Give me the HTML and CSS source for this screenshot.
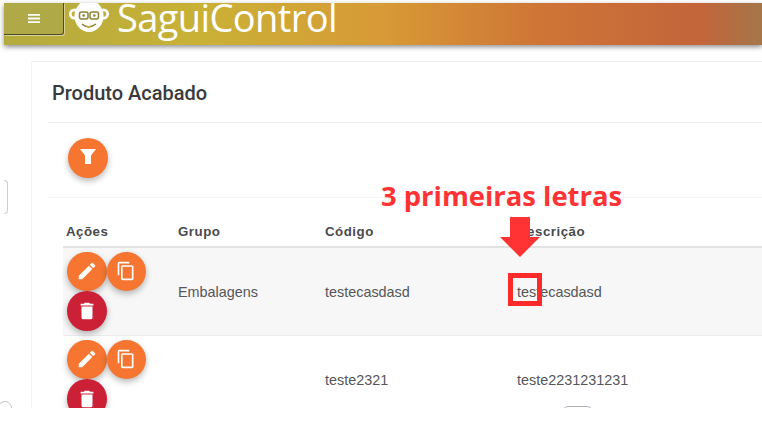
FILE: index.html
```html
<!DOCTYPE html>
<html lang="pt">
<head>
  <meta charset="UTF-8" />
  <title>SaguiControl</title>
  <link rel="stylesheet" href="styles.css">
</head>
<body>
  <div class="shot">
    <div class="topbar">
      <button class="menu-btn" type="button">
        <svg width="12" height="9" viewBox="0 0 12 9"><path d="M0 0h12v1.800H0zM0 3.600h12v1.800H0zM0 7.200h12V9H0z" fill="#fff"/></svg>
      </button>
      <svg class="logo-mark" width="42" height="32" viewBox="0 2 42 32">
        <circle cx="6.500" cy="13" r="5.500" fill="#fff"/>
        <circle cx="35.500" cy="13" r="5.500" fill="#fff"/>
        <circle cx="6.500" cy="13" r="2.800" fill="#c2ae3f"/>
        <circle cx="35.500" cy="13" r="2.800" fill="#c2ae3f"/>
        <ellipse cx="21" cy="15" rx="14.500" ry="16" fill="#fff"/>
        <rect x="11.500" y="11" width="8.500" height="7" rx="2" fill="#fff" stroke="#8a8434" stroke-width="1.500"/>
        <rect x="22" y="11" width="8.500" height="7" rx="2" fill="#fff" stroke="#8a8434" stroke-width="1.500"/>
        <circle cx="15.700" cy="14.500" r="1.300" fill="#8a8434"/>
        <circle cx="26.300" cy="14.500" r="1.300" fill="#8a8434"/>
        <path d="M14 23c3 3 9 4 14 0" fill="none" stroke="#8a8434" stroke-width="1.500"/>
        <path d="M18 25c1 3 4 3 5 0" fill="#c2ae3f"/>
      </svg>
      <div class="logo-text">SaguiControl</div>
    </div>

    <div class="page">
      <div class="side-tab"></div>
      <div class="side-arc"></div>
      <div class="card">
        <h1 class="card-title">Produto Acabado</h1>
        <div class="filter-row">
          <button class="fab" type="button">
            <svg class="filter-icon" width="16" height="15" viewBox="0 0 16 15"><path d="M0 0h16l-5 6.500V15H5V6.500z" fill="#fff"/></svg>
          </button>
        </div>

        <div class="table">
          <div class="row head">
            <div class="cell actions">Ações</div>
            <div class="cell grupo">Grupo</div>
            <div class="cell codigo">Código</div>
            <div class="cell">Descrição</div>
          </div>

          <div class="row striped">
            <div class="cell actions">
              <div class="btn-wrap">
                <button class="fab" type="button">
                  <svg width="22" height="22" viewBox="0 0 24 24"><path d="M3 17.250V21h3.750L17.810 9.940l-3.750-3.750zM20.710 7.040a1 1 0 0 0 0-1.410l-2.340-2.340a1 1 0 0 0-1.410 0l-1.830 1.830 3.750 3.750z" fill="#fff"/></svg>
                </button>
                <button class="fab" type="button">
                  <svg width="20" height="20" viewBox="0 0 24 24"><path d="M16 1H4a2 2 0 0 0-2 2v14h2V3h12zm3 4H8a2 2 0 0 0-2 2v14a2 2 0 0 0 2 2h11a2 2 0 0 0 2-2V7a2 2 0 0 0-2-2zm0 16H8V7h11z" fill="#fff"/></svg>
                </button>
                <button class="fab danger" type="button">
                  <svg width="22" height="22" viewBox="0 0 24 24"><path d="M6 19a2 2 0 0 0 2 2h8a2 2 0 0 0 2-2V7H6zM19 4h-3.500l-1-1h-5l-1 1H5v2h14z" fill="#fff"/></svg>
                </button>
              </div>
            </div>
            <div class="cell grupo">Embalagens</div>
            <div class="cell codigo">testecasdasd</div>
            <div class="cell">testecasdasd</div>
          </div>

          <div class="row">
            <div class="cell actions">
              <div class="btn-wrap">
                <button class="fab" type="button">
                  <svg width="22" height="22" viewBox="0 0 24 24"><path d="M3 17.250V21h3.750L17.810 9.940l-3.750-3.750zM20.710 7.040a1 1 0 0 0 0-1.410l-2.340-2.340a1 1 0 0 0-1.410 0l-1.830 1.830 3.750 3.750z" fill="#fff"/></svg>
                </button>
                <button class="fab" type="button">
                  <svg width="20" height="20" viewBox="0 0 24 24"><path d="M16 1H4a2 2 0 0 0-2 2v14h2V3h12zm3 4H8a2 2 0 0 0-2 2v14a2 2 0 0 0 2 2h11a2 2 0 0 0 2-2V7a2 2 0 0 0-2-2zm0 16H8V7h11z" fill="#fff"/></svg>
                </button>
                <button class="fab danger" type="button">
                  <svg width="22" height="22" viewBox="0 0 24 24"><path d="M6 19a2 2 0 0 0 2 2h8a2 2 0 0 0 2-2V7H6zM19 4h-3.500l-1-1h-5l-1 1H5v2h14z" fill="#fff"/></svg>
                </button>
              </div>
            </div>
            <div class="cell grupo"></div>
            <div class="cell codigo">teste2321</div>
            <div class="cell">teste2231231231</div>
          </div>
        </div>
      </div>

      <div class="pill"></div>

      <!-- anotacao por cima do print -->
      <div class="note">3 primeiras letras</div>
      <svg class="note-arrow" width="40" height="40" viewBox="0 0 40 40"><path d="M10 0h20v20h10L20 40 0 20h10z" fill="#ff3333"/></svg>
      <div class="note-box"></div>
    </div>
  </div>
</body>
</html>
```

FILE: styles.css
```css
* { margin: 0; padding: 0; box-sizing: border-box; }
html, body {
  background: #fff;
  overflow: hidden;
}
body {
  width: 762px;
  height: 426px;
  font-family: 'Liberation Sans', sans-serif;
}
button { border: none; cursor: pointer; }

.shot {
  height: 408px;
  padding: 3px 0 0 4px;
  overflow: hidden;
}

.topbar {
  height: 42px;
  display: flex;
  position: relative;
  z-index: 2;
  background: linear-gradient(90deg, #b3ab3e 0%, #c9b136 26%, #d89a36 50%, #cf7636 70%, #c2653a 92%, #a5764a 100%);
  box-shadow: 0 2px 5px rgba(0,0,0,0.45);
}
.menu-btn {
  width: 60px;
  height: 32px;
  flex-shrink: 0;
  background: #afa948;
  border-right: 1px solid #4c4a2a;
  border-bottom: 1px solid #4c4a2a;
  border-radius: 0 0 3px 0;
  box-shadow: 1px 1px 0 rgba(255,255,255,0.45);
  display: flex;
  align-items: center;
  justify-content: center;
}
.logo-mark {
  margin-left: 4px;
  flex-shrink: 0;
}
.logo-text {
  margin: -3px 0 0 7px;
  height: 34px;
  color: #fff;
  font-family: 'Open Sans', sans-serif;
  font-size: 38px;
  letter-spacing: -0.6px;
  line-height: 34px;
  white-space: nowrap;
}

.page {
  position: relative;
  padding: 16px 0 0 27px;
  height: 363px;
}
.side-tab {
  position: absolute;
  left: 0;
  top: 135px;
  width: 4px;
  height: 34px;
  background: #fff;
  border: 1px solid #c9ccd4;
  border-left: none;
  border-radius: 0 4px 4px 0;
}
.side-arc {
  position: absolute;
  left: -6px;
  top: 356px;
  width: 14px;
  height: 14px;
  border: 1px solid #bfc2c8;
  border-radius: 50%;
}

.card {
  height: 360px;
  padding: 0 0 0 16px;
  border-top: 1px solid #ebedf2;
  border-left: 1px solid #f2f3f6;
}
.card-title {
  height: 61px;
  padding-left: 4px;
  font-family: 'Roboto', sans-serif;
  font-size: 20px;
  font-weight: 500;
  line-height: 62px;
  color: #3a3a3c;
  border-bottom: 1px solid #ebedf2;
}
.filter-row {
  height: 75px;
  padding: 15px 0 0 20px;
  border-bottom: 1px solid #f4f4f6;
}

.fab {
  width: 40px;
  height: 40px;
  flex-shrink: 0;
  border-radius: 50%;
  background: #f57531;
  display: flex;
  align-items: center;
  justify-content: center;
  box-shadow: 0 3px 6px rgba(0,0,0,0.28);
}
.fab.danger { background: #cb2036; }
.filter-icon { margin-bottom: 4px; }

.table { padding: 18px 0 0 15px; }
.row {
  display: flex;
  height: 88px;
  border-bottom: 1px solid #ececec;
  font-size: 14.4px;
  color: #55565a;
}
.row.head {
  height: 32px;
  border-bottom: 2px solid #e2e2e2;
  font-size: 13.3px;
  font-weight: 700;
  color: #4a4a4e;
  letter-spacing: 0.5px;
}
.row.striped { background: #f7f7f7; }

.cell {
  display: flex;
  align-items: center;
}
.cell.actions { width: 115px; padding-left: 3px; }
.cell.grupo { width: 147px; }
.cell.codigo { width: 192px; }

.btn-wrap {
  width: 80px;
  margin-left: 1px;
  display: flex;
  flex-wrap: wrap;
  align-self: flex-start;
  padding-top: 3.5px;
}
.btn-wrap .fab {
  width: 39.5px;
  height: 39.5px;
}

.pill {
  position: absolute;
  left: 558px;
  top: 361px;
  width: 31px;
  height: 12px;
  border: 1px solid #aeb2ba;
  border-radius: 6px;
}

.note {
  position: absolute;
  left: 377px;
  top: 132px;
  font-family: 'Open Sans', sans-serif;
  font-size: 27.4px;
  font-weight: 700;
  color: #ff3333;
  white-space: nowrap;
}
.note-arrow {
  position: absolute;
  left: 496px;
  top: 172px;
}
.note-box {
  position: absolute;
  left: 504px;
  top: 228px;
  width: 34px;
  height: 33px;
  border: 5px solid #ff2a2a;
}
```
